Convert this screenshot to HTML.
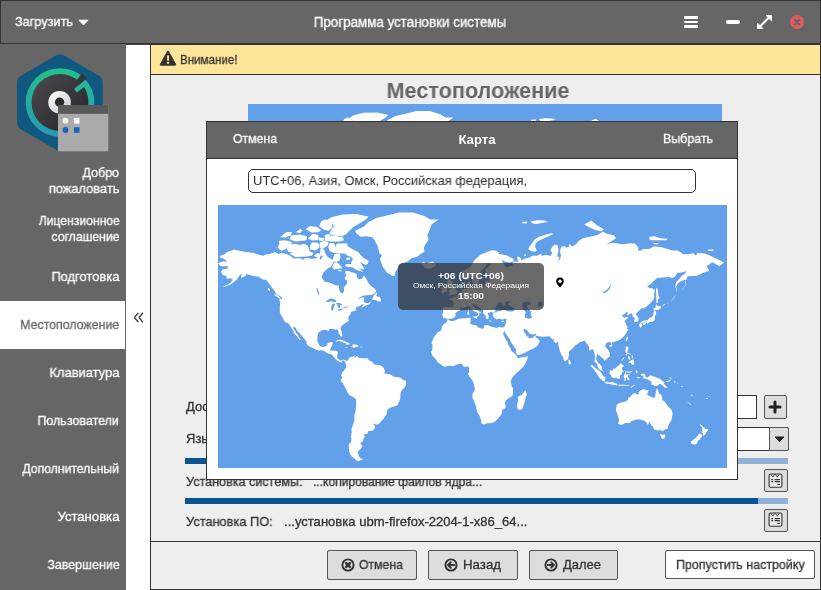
<!DOCTYPE html><html><head><meta charset="utf-8"><title>Программа установки системы</title><style>html,body{margin:0;padding:0}body{width:821px;height:590px;position:relative;overflow:hidden;background:#eee;font-family:'Liberation Sans', sans-serif}.t{position:absolute;white-space:nowrap;display:inline-block;-webkit-text-stroke:0.3px currentColor;will-change:transform}</style></head><body><div style="position:absolute;left:0px;top:0px;width:821px;height:590px;background:#eee"></div>
<div style="position:absolute;left:0px;top:0px;width:821px;height:44px;background:#666;box-sizing:border-box;border:1px solid #333"></div>
<div style="position:absolute;left:0px;top:44px;width:126px;height:546px;background:#666"></div>
<div style="position:absolute;left:126px;top:44px;width:24px;height:546px;background:#fff"></div>
<div style="position:absolute;left:126px;top:44px;width:24px;height:1px;background:#444"></div>
<div style="position:absolute;left:150px;top:44px;width:671px;height:498px;background:#eee;box-sizing:border-box;border:1px solid #333"></div>
<div style="position:absolute;left:151px;top:45px;width:669px;height:29px;background:#ffe599;border-bottom:1px solid #333"></div>
<div style="position:absolute;left:150px;top:541px;width:671px;height:49px;background:#eee;box-sizing:border-box;border:1px solid #333"></div>
<span class="t" style="left:15.2px;top:12.60px;font-size:13px;line-height:17px;color:#fff;font-weight:normal;transform:scaleX(0.9771);transform-origin:0 50%;">Загрузить</span>
<svg style="position:absolute;left:78px;top:19px" width="11" height="7" viewBox="0 0 11 7"><path d="M1 1.2h9L5.5 6z" fill="#fff" stroke="#fff" stroke-width="1" stroke-linejoin="round"/></svg>
<span class="t" style="left:210.2px;width:400px;text-align:center;top:12.65px;font-size:14px;line-height:18px;color:#fff;font-weight:normal;transform:scaleX(0.9550);transform-origin:50% 50%;">Программа установки системы</span>
<div style="position:absolute;left:684px;top:16px;width:14px;height:2.6px;background:#fff;border-radius:1px"></div>
<div style="position:absolute;left:684px;top:20.5px;width:14px;height:2.6px;background:#fff;border-radius:1px"></div>
<div style="position:absolute;left:684px;top:25px;width:14px;height:2.6px;background:#fff;border-radius:1px"></div>
<div style="position:absolute;left:726px;top:20px;width:14px;height:4px;background:#fff;border-radius:2px"></div>
<svg style="position:absolute;left:756px;top:14px" width="17" height="16" viewBox="0 0 17 16"><g fill="#fff" stroke="#fff" stroke-linejoin="round" stroke-linecap="round"><path d="M4 12.5L13 3.5" stroke-width="2" fill="none"/><path d="M10.500 1.500h5v5z" stroke-width="1"/><path d="M1.500 9.500v5h5z" stroke-width="1"/></g></svg>
<svg style="position:absolute;left:789px;top:14px" width="16" height="16" viewBox="0 0 16 16"><circle cx="8" cy="8" r="7" fill="#e05c5c"/><path d="M5.800 5.800l4.400 4.400M10.200 5.800l-4.400 4.400" stroke="#666" stroke-width="2.100" stroke-linecap="round"/></svg>
<div style="position:absolute;left:0px;top:301px;width:125px;height:47.5px;background:#fff"></div>
<span class="t" style="right:701.7px;top:164.00px;font-size:13px;line-height:17px;color:#fff;font-weight:normal;transform:scaleX(0.9634);transform-origin:100% 50%;">Добро</span>
<span class="t" style="right:701.7px;top:180.00px;font-size:13px;line-height:17px;color:#fff;font-weight:normal;transform:scaleX(0.9881);transform-origin:100% 50%;">пожаловать</span>
<span class="t" style="right:701.7px;top:212.00px;font-size:13px;line-height:17px;color:#fff;font-weight:normal;transform:scaleX(0.9334);transform-origin:100% 50%;">Лицензионное</span>
<span class="t" style="right:701.7px;top:228.00px;font-size:13px;line-height:17px;color:#fff;font-weight:normal;transform:scaleX(0.9381);transform-origin:100% 50%;">соглашение</span>
<span class="t" style="right:701.7px;top:268.00px;font-size:13px;line-height:17px;color:#fff;font-weight:normal;transform:scaleX(0.9938);transform-origin:100% 50%;">Подготовка</span>
<span class="t" style="right:702.2px;top:316.00px;font-size:13px;line-height:17px;color:#666;font-weight:normal;transform:scaleX(0.9506);transform-origin:100% 50%;">Местоположение</span>
<span class="t" style="right:701.7px;top:364.00px;font-size:13px;line-height:17px;color:#fff;font-weight:normal;transform:scaleX(0.9940);transform-origin:100% 50%;">Клавиатура</span>
<span class="t" style="right:701.7px;top:412.00px;font-size:13px;line-height:17px;color:#fff;font-weight:normal;transform:scaleX(0.9604);transform-origin:100% 50%;">Пользователи</span>
<span class="t" style="right:701.7px;top:460.00px;font-size:13px;line-height:17px;color:#fff;font-weight:normal;transform:scaleX(0.9383);transform-origin:100% 50%;">Дополнительный</span>
<span class="t" style="right:701.7px;top:508.00px;font-size:13px;line-height:17px;color:#fff;font-weight:normal;transform:scaleX(1.0089);transform-origin:100% 50%;">Установка</span>
<span class="t" style="right:701.7px;top:556.00px;font-size:13px;line-height:17px;color:#fff;font-weight:normal;transform:scaleX(0.9545);transform-origin:100% 50%;">Завершение</span>
<svg style="position:absolute;left:133px;top:312px" width="11" height="11" viewBox="0 0 11 11"><path d="M5 1.3L1.5 5.5 5 9.7M9.5 1.3L6 5.5l3.5 4.2" fill="none" stroke="#444" stroke-width="1.4" stroke-linecap="round" stroke-linejoin="round"/></svg>
<svg style="position:absolute;left:10px;top:48px" width="106" height="110" viewBox="10 48 106 110">
<defs><linearGradient id="tg" x1="0" y1="0" x2="0" y2="1"><stop offset="0" stop-color="#23c08c"/><stop offset="1" stop-color="#2799b3"/></linearGradient>
<linearGradient id="hg" x1="0" y1="0" x2="1" y2="1"><stop offset="0" stop-color="#fff"/><stop offset="1" stop-color="#c8c8c8"/></linearGradient><linearGradient id="dg" x1="0" y1="0" x2="1" y2="1"><stop offset="0" stop-color="#4a4a4e"/><stop offset="1" stop-color="#26262a"/></linearGradient></defs>
<path d="M59.9 63.7L93.5 83.1L93.5 121.9L59.9 141.3L26.3 121.9L26.3 83.1Z" fill="#10587f" stroke="#10587f" stroke-width="18.4" stroke-linejoin="round"/>
<circle cx="60" cy="102.5" r="34.3" fill="url(#tg)"/>
<circle cx="60" cy="102.5" r="28.5" fill="url(#dg)"/>
<path d="M80.1 84.4 L86.8 78.4 L81.7 73.7 L76.2 80.9 Z" fill="#36363a"/>
<path d="M86.6 82.1 L75.5 90.6" stroke="#25b59a" stroke-width="4.6" fill="none"/>
<circle cx="59.6" cy="102.3" r="11.3" fill="url(#hg)"/>
<circle cx="59.6" cy="102.3" r="4.700" fill="#2c2c30"/>
<rect x="58" y="105" width="50.300" height="46.300" fill="#aaa"/>
<rect x="58" y="105" width="50.300" height="8.800" fill="#595959"/>
<circle cx="65.500" cy="120.700" r="2.900" fill="#f4f4ee"/>
<rect x="73.900" y="118" width="5.600" height="5.600" fill="#fafafa"/>
<circle cx="65.500" cy="130" r="2.900" fill="#1565c0"/>
<rect x="73.900" y="127.200" width="5.600" height="5.600" fill="#1565c0"/>
</svg>
<svg style="position:absolute;left:159px;top:50px" width="18" height="17" viewBox="0 0 18 17"><path d="M9 2L16 14.500H2Z" fill="#333" stroke="#333" stroke-width="2.400" stroke-linejoin="round"/><rect x="8.100" y="5.500" width="1.900" height="5.200" fill="#ffe599"/><rect x="8.100" y="11.800" width="1.900" height="2" fill="#ffe599"/></svg>
<span class="t" style="left:180.2px;top:51.00px;font-size:13px;line-height:17px;color:#333;font-weight:normal;transform:scaleX(0.8906);transform-origin:0 50%;">Внимание!</span>
<span class="t" style="left:277.6px;width:400px;text-align:center;top:75.68px;font-size:22px;line-height:29px;color:#666;font-weight:bold;transform:scaleX(0.9836);transform-origin:50% 50%;-webkit-text-stroke:0;">Местоположение</span>
<svg style="position:absolute;left:248px;top:104px" width="474" height="245" viewBox="0 0 509 263" preserveAspectRatio="none"><rect width="509" height="263" fill="#62a0ea"/><use href="#land"/></svg>
<span class="t" style="left:185.5px;top:397.50px;font-size:13px;line-height:17px;color:#333;font-weight:normal;">Доступ</span>
<span class="t" style="left:185.5px;top:429.60px;font-size:13px;line-height:17px;color:#333;font-weight:normal;">Язык</span>
<div style="position:absolute;left:600px;top:395px;width:157px;height:24px;background:#fff;box-sizing:border-box;border:1px solid #333"></div>
<div style="position:absolute;left:763.5px;top:395.3px;width:23.7px;height:23.7px;background:#ddd;box-sizing:border-box;border:1px solid #555;border-radius:2px"></div>
<svg style="position:absolute;left:768px;top:399.800px" width="14" height="14" viewBox="0 0 14 14"><path d="M7 2v10M2 7h10" stroke="#222" stroke-width="3" stroke-linecap="round"/></svg>
<div style="position:absolute;left:600px;top:427px;width:189px;height:24px;background:#fff;box-sizing:border-box;border:1px solid #333;border-radius:2px"></div>
<div style="position:absolute;left:769px;top:427px;width:20px;height:24px;background:#ddd;box-sizing:border-box;border:1px solid #555;border-radius:0 2px 2px 0"></div>
<svg style="position:absolute;left:774.300px;top:436.100px" width="11" height="7" viewBox="0 0 11 7"><path d="M1 1h9L5.500 5.600z" fill="#222" stroke="#222" stroke-width="1" stroke-linejoin="round"/></svg>
<div style="position:absolute;left:185px;top:458px;width:603px;height:6px;background:#8fb2d6"></div>
<div style="position:absolute;left:185px;top:458px;width:500px;height:6px;background:#0b5394"></div>
<div style="position:absolute;left:185px;top:498px;width:603px;height:6px;background:#8fb2d6"></div>
<div style="position:absolute;left:185px;top:498px;width:573px;height:6px;background:#0b5394"></div>
<span class="t" style="left:185.5px;top:472.50px;font-size:13px;line-height:17px;color:#333;font-weight:normal;transform:scaleX(0.9688);transform-origin:0 50%;">Установка системы:</span>
<span class="t" style="left:313.0px;top:472.50px;font-size:13px;line-height:17px;color:#333;font-weight:normal;transform:scaleX(0.9259);transform-origin:0 50%;">...копирование файлов ядра...</span>
<span class="t" style="left:185.5px;top:512.90px;font-size:13px;line-height:17px;color:#333;font-weight:normal;transform:scaleX(0.9838);transform-origin:0 50%;">Установка ПО:</span>
<span class="t" style="left:283.5px;top:512.90px;font-size:13px;line-height:17px;color:#333;font-weight:normal;transform:scaleX(1.0041);transform-origin:0 50%;">...установка ubm-firefox-2204-1-x86_64...</span>
<div style="position:absolute;left:763.5px;top:468.6px;width:24.5px;height:23px;background:#ddd;box-sizing:border-box;border:1px solid #555;border-radius:2px"></div>
<svg style="position:absolute;left:768px;top:472.5px" width="15" height="16" viewBox="0 0 15 16"><rect x="1.1" y="1" width="12.800" height="13.300" rx="1.600" fill="#ececec" stroke="#333" stroke-width="1.100"/><path d="M2.800 1.300l2 2.800 2-2.800M7.300 1.300l2 2.800 2-2.800" fill="none" stroke="#333" stroke-width="0.900"/><path d="M3.300 6.600h1.800M6.600 6.600h5.300M3.300 8.600h1.800M6.600 8.600h5.300M9.400 11.400h2.500" stroke="#333" stroke-width="1.100"/></svg>
<div style="position:absolute;left:763.5px;top:508.5px;width:24.5px;height:23px;background:#ddd;box-sizing:border-box;border:1px solid #555;border-radius:2px"></div>
<svg style="position:absolute;left:768px;top:512.4px" width="15" height="16" viewBox="0 0 15 16"><rect x="1.1" y="1" width="12.800" height="13.300" rx="1.600" fill="#ececec" stroke="#333" stroke-width="1.100"/><path d="M2.800 1.300l2 2.800 2-2.800M7.300 1.300l2 2.800 2-2.800" fill="none" stroke="#333" stroke-width="0.900"/><path d="M3.300 6.600h1.800M6.600 6.600h5.300M3.300 8.600h1.800M6.600 8.600h5.300M9.400 11.400h2.500" stroke="#333" stroke-width="1.100"/></svg>
<div style="position:absolute;left:327.2px;top:550px;width:89.6px;height:29.5px;background:#ddd;box-sizing:border-box;border:1px solid #555;border-radius:2px"></div>
<svg style="position:absolute;left:340.9px;top:557.6px" width="14" height="14" viewBox="0 0 14 14"><circle cx="7" cy="7" r="5.600" fill="none" stroke="#333" stroke-width="1.900"/><path d="M5.100 5.100l3.800 3.800M8.900 5.100l-3.800 3.800" stroke="#333" stroke-width="2.500" stroke-linecap="round"/></svg>
<span class="t" style="left:359.3px;top:555.70px;font-size:13px;line-height:17px;color:#333;font-weight:normal;transform:scaleX(0.9409);transform-origin:0 50%;">Отмена</span>
<div style="position:absolute;left:428.4px;top:550px;width:89.4px;height:29.5px;background:#ddd;box-sizing:border-box;border:1px solid #555;border-radius:2px"></div>
<svg style="position:absolute;left:444.1px;top:557.6px" width="14" height="14" viewBox="0 0 14 14"><circle cx="7" cy="7" r="5.600" fill="none" stroke="#333" stroke-width="1.900"/><path d="M10.300 7H4.500M6.800 4.300L4 7l2.800 2.700" fill="none" stroke="#333" stroke-width="2" stroke-linecap="round" stroke-linejoin="round"/></svg>
<span class="t" style="left:462.7px;top:555.70px;font-size:13px;line-height:17px;color:#333;font-weight:normal;transform:scaleX(1.0228);transform-origin:0 50%;">Назад</span>
<div style="position:absolute;left:528.6px;top:550px;width:89.4px;height:29.5px;background:#ddd;box-sizing:border-box;border:1px solid #555;border-radius:2px"></div>
<svg style="position:absolute;left:544.3px;top:557.6px" width="14" height="14" viewBox="0 0 14 14"><circle cx="7" cy="7" r="5.600" fill="none" stroke="#333" stroke-width="1.900"/><path d="M3.700 7h5.800M7.200 4.300L10 7 7.200 9.700" fill="none" stroke="#333" stroke-width="1.800" stroke-linecap="round" stroke-linejoin="round"/></svg>
<span class="t" style="left:563.4px;top:555.70px;font-size:13px;line-height:17px;color:#333;font-weight:normal;transform:scaleX(0.9975);transform-origin:0 50%;">Далее</span>
<div style="position:absolute;left:665.4px;top:550.3px;width:149.4px;height:29.2px;background:#fff;box-sizing:border-box;border:1px solid #555;border-radius:2px"></div>
<span class="t" style="left:675.9px;top:555.70px;font-size:13px;line-height:17px;color:#333;font-weight:normal;transform:scaleX(0.9592);transform-origin:0 50%;">Пропустить настройку</span>
<div style="position:absolute;left:206px;top:121px;width:532px;height:359px;background:#fff;box-sizing:border-box;border:1px solid #333"></div>
<div style="position:absolute;left:207px;top:122px;width:530px;height:36px;background:#666;border-bottom:1px solid #333"></div>
<span class="t" style="left:233.0px;top:129.70px;font-size:13px;line-height:17px;color:#fff;font-weight:normal;transform:scaleX(0.9431);transform-origin:0 50%;">Отмена</span>
<span class="t" style="left:277.4px;width:400px;text-align:center;top:130.50px;font-size:13px;line-height:17px;color:#fff;font-weight:bold;transform:scaleX(1.0135);transform-origin:50% 50%;-webkit-text-stroke:0;">Карта</span>
<span class="t" style="left:662.8px;top:129.70px;font-size:13px;line-height:17px;color:#fff;font-weight:normal;transform:scaleX(0.9547);transform-origin:0 50%;">Выбрать</span>
<div style="position:absolute;left:248px;top:169px;width:448px;height:24px;background:#fff;box-sizing:border-box;border:1px solid #333;border-radius:5px"></div>
<span class="t" style="left:253.0px;top:171.70px;font-size:13px;line-height:17px;color:#2a2a2a;font-weight:normal;transform:scaleX(0.9924);transform-origin:0 50%;-webkit-text-stroke:0;">UTC+06, Азия, Омск, Российская федерация,</span>
<svg style="position:absolute;left:218px;top:205px" width="509" height="263" viewBox="0 0 509 263"><rect width="509" height="263" fill="#62a0ea"/><g id="land"><path fill="#fff" d="M0.0 58.6L2.4 57.2L5.9 56.3L8.8 57.2L7.8 55.3L5.7 53.7L1.7 52.2L2.5 50.7L7.1 49.0L8.6 47.2L16.3 44.6L22.6 45.9L27.6 47.0L35.3 47.7L38.2 49.0L45.2 50.7L48.1 49.2L49.5 49.5L55.1 48.0L56.6 46.7L60.8 49.2L62.2 48.0L66.5 48.5L72.1 50.5L74.9 52.9L76.3 53.4L82.0 53.2L84.8 54.1L84.8 55.8L86.2 53.4L89.1 52.9L94.0 53.7L98.3 53.4L99.7 51.7L101.8 52.4L102.5 54.9L104.6 51.7L101.8 49.2L102.5 44.1L103.9 42.8L106.7 45.4L107.5 48.7L109.6 51.7L113.1 54.1L114.5 54.9L116.6 49.2L121.6 48.5L122.6 51.7L121.6 55.3L118.8 57.0L115.9 56.5L114.5 58.9L113.1 61.8L109.6 63.4L107.5 65.6L105.3 67.8L103.9 71.0L104.3 73.6L106.7 76.8L110.3 77.2L113.1 78.2L117.4 80.2L120.9 80.8L121.3 85.1L123.0 88.0L124.7 88.5L126.1 86.1L125.8 82.2L128.7 79.2L129.4 76.2L126.5 73.6L128.0 71.0L127.2 65.9L130.8 66.1L133.6 67.2L135.7 67.8L138.6 68.9L139.3 73.1L141.4 74.6L144.2 73.6L146.1 70.4L148.5 74.2L150.6 78.2L152.7 80.8L156.2 83.2L158.4 86.1L156.9 88.0L154.1 89.8L149.9 90.2L145.6 90.4L142.8 91.7L140.0 94.0L137.1 96.4L139.3 94.8L144.2 92.2L146.6 93.0L145.6 94.4L145.9 96.2L146.3 97.6L148.5 98.0L150.6 98.3L152.7 96.6L152.7 98.0L151.3 99.2L147.8 100.4L144.9 102.2L143.9 101.5L145.6 99.4L146.3 98.9L142.8 99.7L142.8 100.4L140.0 101.5L138.3 102.2L137.4 103.7L138.6 105.2L136.9 105.8L135.0 106.3L132.9 107.3L132.9 108.8L131.5 110.3L130.8 111.6L130.1 113.2L130.4 114.0L130.8 116.1L128.9 116.9L127.2 118.2L125.8 119.3L124.4 120.3L123.0 121.7L122.4 123.5L123.6 126.6L124.4 129.2L124.0 131.5L122.7 131.7L121.9 130.0L120.5 127.7L120.5 125.9L118.8 124.3L116.9 124.8L115.2 123.7L113.1 123.9L111.0 124.0L111.3 125.7L109.6 125.6L107.5 124.9L104.6 124.9L103.2 125.9L100.4 127.4L99.8 129.7L99.4 132.7L99.3 136.0L101.5 140.4L103.9 142.0L107.5 141.4L109.3 140.1L109.7 137.9L113.1 137.0L114.5 137.2L114.8 138.7L113.5 141.6L112.7 143.1L112.0 145.4L113.8 145.5L115.9 145.4L118.8 146.0L119.9 146.7L119.5 149.6L119.0 151.7L119.5 153.2L120.9 154.6L122.3 155.4L124.4 155.0L125.8 154.6L128.0 155.7L128.7 156.7L127.2 157.4L126.5 156.0L125.1 155.3L123.7 156.4L124.0 157.7L122.3 157.3L120.5 156.4L119.2 155.6L117.4 153.9L116.2 152.4L113.8 149.6L111.7 149.0L108.9 148.1L106.0 146.0L103.9 144.9L101.8 145.7L98.3 144.7L96.1 143.8L93.3 142.3L90.5 140.9L88.4 139.0L88.7 137.2L87.2 134.7L84.8 132.0L83.0 129.7L81.3 127.7L79.2 125.9L77.8 122.8L75.4 121.7L75.4 123.5L77.1 125.9L78.5 128.2L80.2 130.4L81.3 132.7L82.7 134.7L82.0 135.1L79.9 133.0L78.9 131.2L77.1 129.2L75.2 127.7L76.1 126.6L74.2 124.6L72.8 122.0L71.8 120.3L70.0 118.0L67.2 117.2L65.3 114.0L64.3 111.9L62.5 109.1L61.8 107.6L61.9 104.9L61.8 102.3L62.2 97.6L61.2 93.7L63.6 93.9L64.3 95.3L63.9 92.6L61.5 90.8L58.0 88.9L56.6 86.1L54.4 83.2L53.0 81.2L50.9 78.2L48.1 74.8L44.5 74.4L42.4 72.7L39.6 71.5L35.3 71.0L31.8 70.0L28.3 69.1L27.6 71.0L25.4 72.1L22.9 72.7L23.3 70.0L25.4 68.5L22.6 69.3L20.5 72.1L19.1 74.2L16.3 76.8L13.4 78.9L9.9 80.6L6.4 81.8L4.5 82.0L7.8 80.2L10.6 79.2L13.4 76.8L14.8 73.8L13.4 73.6L10.6 73.6L8.5 73.8L8.5 71.0L4.9 70.0L3.5 67.8L2.8 66.7L4.5 64.5L7.1 64.1L9.9 63.2L9.9 61.2L7.1 61.2L4.2 61.2L2.1 60.5ZM137.1 25.8L145.6 21.8L150.6 16.9L158.4 12.9L166.8 11.1L181.0 7.6L195.1 7.6L206.4 11.1L212.1 14.6L220.6 14.6L213.5 19.5L211.4 25.8L209.3 30.3L210.7 34.6L207.8 38.8L205.7 42.8L206.4 46.7L202.2 49.2L199.4 51.7L193.7 52.9L189.5 56.5L184.5 58.2L181.0 60.0L179.6 63.4L177.4 66.7L176.7 70.6L174.6 71.3L171.8 69.3L169.0 67.8L166.8 64.5L164.7 61.8L163.3 57.7L161.9 54.1L164.0 50.5L161.2 48.0L160.5 44.1L159.1 40.1L156.9 36.0L154.8 32.6L148.5 31.2L142.8 31.7L138.6 28.8ZM202.9 58.9L205.7 56.8L207.8 58.9L212.1 57.2L214.9 56.5L217.0 58.9L218.4 60.0L216.3 61.6L212.1 63.4L208.5 63.2L205.7 62.5L206.4 61.2L203.6 60.3L205.7 59.6ZM145.6 67.0L138.6 65.0L134.3 62.3L129.4 61.8L126.8 60.9L128.0 59.1L132.9 58.9L133.6 56.5L135.0 54.1L132.9 51.7L129.4 50.5L126.5 48.5L122.3 48.5L118.1 48.2L113.8 47.2L111.3 45.4L110.3 41.5L111.7 38.2L115.9 38.0L117.4 40.7L116.6 43.3L118.8 38.8L123.0 38.2L127.2 40.1L130.1 41.5L132.9 43.3L137.1 45.4L140.7 47.2L142.4 50.0L146.3 53.4L150.6 55.8L149.9 58.4L147.8 60.3L144.9 58.6L142.1 56.5L144.2 60.0L146.3 63.9L144.2 64.5L140.7 63.0L143.5 65.4ZM71.4 48.2L74.9 50.5L77.1 52.0L83.4 51.7L89.1 51.5L94.0 50.5L95.4 48.0L91.9 46.4L89.8 40.7L86.2 38.8L82.0 40.1L76.3 38.8L70.7 40.1L68.6 44.1L70.7 47.0L75.6 47.5ZM59.4 42.8L63.6 45.7L67.4 44.4L70.0 41.5L72.8 39.6L74.2 37.4L70.7 36.0L65.7 35.2L60.8 36.0L61.1 39.6ZM92.2 44.6L97.6 45.4L101.1 42.8L101.4 39.6L99.0 37.4L94.0 37.4L91.9 40.7ZM101.8 42.8L105.8 43.3L110.3 40.1L110.3 36.9L106.0 36.0L101.8 37.4L101.8 40.7ZM96.1 50.5L99.7 48.0L103.2 49.5L102.1 52.2L97.8 52.2ZM106.7 35.7L106.7 30.3L111.0 28.8L118.8 31.2L125.1 32.3L125.8 35.5L121.6 36.6L113.1 36.6ZM89.8 33.8L94.7 28.8L100.4 30.0L100.4 34.9L94.7 35.5ZM100.4 32.6L105.8 32.9L105.8 35.7L101.4 36.0ZM71.4 33.8L73.5 30.3L82.0 29.4L89.1 31.2L88.4 35.2L82.0 36.0L77.8 36.6L73.5 35.2ZM62.2 32.3L67.9 27.3L74.2 27.0L72.8 30.3L67.9 32.6ZM111.7 30.6L124.4 31.2L128.7 28.8L132.2 24.9L135.7 21.8L141.4 18.5L147.8 14.6L150.6 11.8L138.6 9.0L124.4 9.4L113.1 12.2L108.9 15.2L114.5 18.5L115.9 21.8L113.1 24.9L111.7 27.9ZM101.1 21.1L103.2 16.2L107.5 14.2L113.8 17.9L114.5 22.7L110.3 25.8L104.6 24.3ZM87.7 24.3L91.9 21.1L99.0 22.1L103.2 25.2L100.4 27.3L93.3 27.6ZM114.1 62.3L116.2 57.7L119.0 57.2L123.0 60.9L124.7 63.0L120.2 64.1L116.2 64.5ZM153.7 95.1L154.8 92.6L156.2 89.8L158.4 87.8L159.1 87.8L158.4 90.8L159.8 91.7L161.9 92.0L162.6 93.5L163.0 95.3L162.5 96.7L160.5 96.2L159.1 96.2L158.4 95.1L155.5 95.1ZM56.1 89.3L60.1 90.4L62.9 93.5L61.5 93.5L59.4 92.0L56.8 90.4ZM49.5 83.2L51.3 83.2L52.3 86.6L50.6 85.5ZM117.4 136.7L118.8 135.2L121.2 134.7L123.7 134.9L125.8 135.8L128.0 136.9L130.1 137.8L132.6 139.1L130.8 139.5L127.7 139.7L128.4 138.5L126.5 137.9L124.4 136.9L122.3 136.3L120.5 135.7L118.8 136.4ZM132.2 141.7L134.6 141.6L135.0 140.9L133.8 139.7L136.2 139.5L138.6 139.7L140.0 140.4L140.8 141.4L139.3 141.7L137.9 142.0L136.4 142.8L135.0 142.2L132.9 142.2ZM126.8 141.9L129.7 142.0L129.4 142.5L127.2 142.5ZM142.5 141.6L144.6 141.7L144.5 142.3L142.5 142.3ZM128.2 156.0L128.9 155.9L130.6 154.6L130.8 153.0L131.8 152.4L133.6 152.0L135.5 151.2L136.7 150.4L136.4 152.2L136.3 152.9L138.3 151.7L138.6 150.7L140.0 151.9L141.0 152.9L144.2 153.0L146.1 153.6L148.5 152.9L150.0 152.9L149.2 153.9L151.3 155.3L151.6 156.0L154.1 156.7L155.5 158.4L156.9 159.7L159.8 159.7L161.9 160.3L164.0 161.3L165.4 162.4L166.8 165.5L166.8 167.4L165.4 168.1L166.8 168.5L169.0 168.8L169.7 169.5L171.1 169.1L173.9 170.2L174.9 171.6L178.2 172.0L181.0 172.2L183.1 173.3L185.2 174.9L187.6 175.4L188.2 178.0L188.0 180.1L186.6 182.5L184.9 184.1L183.1 186.6L182.4 189.4L182.4 193.1L181.4 196.0L180.3 198.2L179.6 199.7L178.2 201.0L176.5 201.2L173.9 202.1L171.8 203.0L169.7 204.6L168.8 206.4L168.8 209.2L166.8 211.8L165.4 214.1L163.6 215.7L161.9 218.1L159.9 219.5L158.1 219.5L155.5 218.4L155.0 219.0L156.7 220.5L157.2 222.1L156.1 224.6L154.1 225.7L149.9 226.2L149.6 228.7L145.6 229.5L147.0 232.1L145.6 233.3L144.9 236.4L142.1 238.2L144.2 240.8L144.2 241.7L142.1 244.5L140.0 246.3L140.0 248.6L140.8 249.9L140.7 251.0L142.1 252.9L145.3 254.3L143.5 255.1L140.7 255.9L138.6 255.5L136.4 253.5L134.3 252.0L132.2 249.5L131.2 246.3L130.8 242.6L130.8 239.6L132.9 237.3L133.6 233.8L132.6 232.6L133.2 230.4L133.6 227.5L133.6 223.7L134.6 220.5L136.2 216.5L136.4 211.8L136.7 208.7L137.7 205.7L138.0 201.9L138.3 198.2L138.1 194.4L136.4 192.8L133.6 191.3L131.2 189.9L129.7 187.7L128.5 185.1L127.0 182.3L125.8 179.7L124.6 177.7L123.0 176.6L122.6 174.4L124.0 172.9L124.7 171.6L123.0 171.2L123.3 169.5L124.1 168.1L124.4 166.9L126.1 165.9L126.5 164.5L128.0 163.1L128.2 161.7L128.0 159.6L127.4 157.9ZM274.0 45.2L277.1 45.4L281.4 47.2L279.9 48.5L284.2 49.5L288.4 50.2L295.5 54.1L295.5 56.5L291.3 57.5L286.3 56.3L283.5 55.1L286.3 60.0L287.0 61.6L290.6 62.5L291.3 61.2L294.8 60.9L294.1 58.2L296.9 56.5L300.0 57.0L299.0 51.7L300.5 51.7L302.6 52.9L303.3 55.6L305.4 53.9L312.5 52.2L313.9 50.7L319.5 50.7L323.1 48.5L323.8 50.7L328.7 49.7L332.3 51.0L334.4 48.0L332.3 45.4L334.4 41.5L336.5 39.6L340.0 40.7L340.5 45.4L339.3 50.5L341.5 52.9L339.3 56.5L342.2 54.1L342.9 50.5L341.9 45.4L343.6 41.5L347.1 41.2L348.2 42.8L350.6 41.7L351.8 38.8L354.2 41.7L359.1 38.2L360.5 36.0L364.8 33.2L371.9 31.7L378.9 30.3L385.0 26.7L388.8 28.8L395.9 30.3L398.0 33.2L391.6 37.4L387.4 39.6L393.1 38.0L397.3 38.0L404.4 39.3L412.9 38.2L417.1 38.8L420.6 42.8L419.9 45.4L422.8 45.4L425.6 44.1L431.2 44.1L435.5 41.5L442.5 42.0L449.6 44.1L453.9 45.4L459.5 45.4L463.8 48.0L465.2 49.2L470.8 49.2L475.1 48.0L477.9 50.5L479.3 48.0L486.4 48.5L492.0 50.5L499.1 54.1L506.2 57.5L502.6 60.0L501.6 61.4L494.9 57.2L493.4 57.7L490.6 60.0L488.5 60.7L490.6 64.5L491.0 66.1L485.0 67.8L480.7 70.0L477.9 71.0L472.2 71.0L469.4 71.5L468.0 75.2L466.6 76.2L468.0 79.2L466.6 81.6L463.8 85.1L461.6 87.0L459.1 88.9L458.1 85.1L457.4 81.2L458.1 77.2L460.9 74.2L463.8 71.0L466.6 68.9L468.7 66.1L470.1 65.6L463.8 67.4L459.5 67.8L456.7 72.1L453.9 73.1L451.0 72.1L444.0 72.5L439.0 73.1L435.5 76.2L432.6 79.2L429.1 81.6L431.9 83.2L434.1 83.2L436.9 84.7L436.2 88.9L436.2 93.5L433.4 97.1L429.8 100.6L425.6 103.5L424.0 103.0L422.3 104.4L420.9 105.8L418.5 108.3L417.8 109.4L419.2 110.8L420.5 113.2L420.6 115.6L419.9 116.3L417.8 116.9L416.1 117.2L416.4 114.8L416.7 113.2L415.7 111.9L414.3 111.6L414.6 109.1L413.3 108.3L410.0 109.9L409.0 110.3L410.0 107.4L408.6 106.9L405.8 109.6L403.9 110.3L405.1 112.1L406.5 112.7L408.6 112.1L410.7 112.9L408.6 114.0L406.5 116.0L407.6 118.0L408.6 120.4L409.7 122.0L408.6 123.5L410.0 124.6L409.3 126.6L407.9 128.5L406.5 130.7L404.4 132.7L402.3 134.7L399.4 135.7L397.3 136.4L394.5 137.3L393.5 139.0L392.6 137.2L390.2 137.0L388.4 138.2L387.1 140.6L388.1 142.6L390.5 145.2L391.9 148.4L391.9 151.3L389.5 153.2L388.4 154.6L386.0 155.7L386.0 153.9L384.6 153.2L383.2 152.4L382.2 150.7L380.3 150.0L380.1 149.0L378.9 149.1L378.6 151.7L377.9 153.9L378.6 154.9L379.3 156.3L380.1 158.1L381.8 159.3L383.6 161.3L383.9 163.8L384.9 166.1L383.7 165.9L381.0 164.1L379.6 161.7L379.3 159.6L378.2 158.1L376.5 156.7L376.8 153.9L377.1 151.0L376.1 148.1L375.5 144.8L374.0 144.1L372.3 145.5L370.9 145.2L371.1 142.3L369.7 139.7L368.0 137.9L367.3 136.0L365.5 136.0L363.4 136.7L361.2 137.2L360.3 138.7L357.7 140.1L355.6 142.3L353.9 144.2L352.1 145.4L350.9 146.7L351.1 149.3L350.5 151.7L350.4 153.4L349.2 154.9L348.1 155.6L347.1 156.6L345.7 155.0L344.7 151.7L343.3 149.6L342.2 146.7L341.2 143.8L340.5 140.9L340.3 137.9L339.8 136.7L337.9 138.2L335.1 136.0L336.9 135.1L334.4 134.2L332.7 132.7L331.6 131.3L328.0 131.5L324.5 131.7L321.0 131.3L318.5 131.0L317.8 128.9L314.6 129.5L312.5 128.9L310.3 127.6L308.9 125.1L306.8 123.7L306.1 124.3L305.4 125.1L306.4 127.4L308.2 129.4L308.7 131.2L309.6 132.0L310.1 130.3L310.5 132.0L310.3 133.0L312.5 133.2L314.6 133.0L316.7 130.7L317.3 129.8L317.6 132.3L320.2 133.9L322.1 135.7L320.5 138.7L319.3 140.9L317.4 142.3L315.3 143.8L311.8 144.9L306.8 147.7L301.2 149.9L299.0 150.0L298.0 147.4L297.9 144.5L295.5 140.9L293.0 137.2L291.3 133.5L289.1 130.4L287.0 127.4L286.9 125.1L286.0 127.4L285.9 127.9L284.5 126.5L283.5 124.5L283.2 122.5L285.9 122.3L286.9 120.4L287.7 118.2L288.3 115.6L288.7 113.9L286.3 113.7L284.2 114.7L280.9 113.5L279.0 114.4L277.1 113.5L276.1 112.4L274.7 110.6L275.3 109.1L274.6 108.3L275.3 107.6L278.5 107.4L278.7 106.4L282.1 106.3L284.9 104.9L287.0 104.9L289.1 106.3L292.0 106.6L294.5 106.6L296.4 105.6L296.2 103.7L294.1 102.3L292.0 100.8L290.3 99.7L291.3 97.1L293.1 95.8L290.6 96.2L287.3 97.4L287.0 98.7L289.1 99.0L287.3 99.7L285.2 100.8L283.5 99.0L285.0 98.0L282.8 97.4L281.1 97.1L279.5 99.2L278.1 101.5L277.1 103.2L276.7 104.1L277.4 105.6L278.5 106.3L276.4 106.6L275.3 107.4L274.6 108.1L274.3 106.9L272.2 106.8L271.5 107.9L270.1 107.6L269.6 109.1L270.5 110.4L271.5 111.6L270.3 111.7L270.3 114.0L269.2 114.0L268.2 113.5L267.5 111.9L268.4 111.1L266.9 110.3L266.1 108.9L265.0 107.4L265.1 105.6L263.8 104.2L261.6 102.9L259.2 101.0L258.0 99.4L257.0 99.9L256.8 98.5L254.9 99.2L255.1 101.1L256.8 102.3L257.8 104.4L260.2 105.1L260.2 105.9L262.0 106.9L263.7 108.1L262.8 108.3L261.6 107.4L261.0 108.8L261.7 109.9L260.6 111.1L259.7 111.7L259.9 110.3L259.9 108.3L258.5 107.3L257.6 106.9L255.9 106.1L254.8 105.2L253.1 104.1L252.1 102.3L251.4 101.3L250.1 100.8L248.1 101.8L246.0 103.0L244.3 102.5L242.5 102.7L241.8 104.1L242.1 105.2L240.6 106.1L238.7 107.1L237.1 109.1L237.8 110.3L236.5 112.2L234.7 113.5L231.3 113.7L229.9 114.7L228.6 113.9L227.2 112.9L224.9 113.2L225.1 110.8L224.1 110.3L225.1 107.4L225.1 104.9L224.4 103.2L226.2 102.0L229.8 102.2L232.6 102.3L235.0 102.5L235.7 100.6L235.8 98.0L234.4 95.8L231.2 94.6L230.7 93.7L233.3 93.0L235.3 93.3L235.0 91.3L235.8 91.9L237.8 91.7L239.7 90.6L239.9 89.1L242.2 88.1L243.5 87.0L244.3 85.1L246.0 84.3L247.7 84.2L249.6 84.0L250.0 82.8L249.3 81.2L249.1 78.2L249.6 77.0L252.5 75.8L252.1 78.2L252.8 78.9L251.4 80.8L251.7 82.2L253.1 82.8L254.9 82.6L257.0 82.8L257.8 83.4L260.2 82.6L263.7 81.8L265.5 82.4L267.2 80.8L267.2 77.6L268.2 76.0L269.5 75.8L270.5 77.2L271.9 76.2L271.9 74.6L270.8 73.6L270.8 72.7L272.9 72.1L277.1 72.1L280.2 71.3L278.1 70.0L274.3 70.2L270.1 71.3L267.6 69.3L267.9 66.7L267.2 64.5L269.3 62.8L272.2 60.5L273.4 59.8L271.7 58.2L268.9 58.4L267.6 61.2L266.5 63.0L263.7 65.0L262.0 67.4L261.9 69.6L264.1 71.3L263.3 72.7L261.3 74.2L260.9 77.2L260.2 78.9L258.0 79.2L257.6 80.4L255.9 80.4L255.3 78.7L254.2 76.0L253.4 73.1L252.5 71.5L252.0 73.1L249.6 74.8L247.4 75.2L245.5 73.3L244.6 70.0L244.6 67.2L246.7 65.2L249.6 63.4L252.4 61.8L254.5 58.9L255.9 55.8L258.0 53.4L260.2 51.7L263.0 49.2L266.5 48.0L270.1 46.4ZM229.2 115.2L230.0 115.0L233.3 116.0L234.7 116.3L237.5 115.2L239.7 114.0L241.8 113.5L244.6 113.5L248.1 113.2L251.4 112.7L253.1 113.2L252.4 114.5L252.8 116.4L251.7 117.7L253.1 119.2L255.2 119.9L256.2 119.8L259.0 120.7L259.7 122.3L262.3 122.9L264.4 123.9L265.8 122.8L265.8 120.9L267.9 119.8L270.2 120.3L272.9 121.7L275.7 122.3L278.5 122.9L279.9 122.3L281.4 121.8L283.2 122.5L283.5 124.5L284.9 127.4L285.6 129.7L287.0 132.7L288.0 134.9L289.8 137.2L290.3 140.1L292.0 142.3L293.4 146.0L295.5 147.4L297.6 149.6L298.8 150.7L298.6 151.7L300.5 153.2L304.0 152.2L306.8 152.0L309.9 151.2L309.6 153.2L308.2 156.7L306.8 159.6L304.7 162.4L302.6 164.5L299.0 167.4L296.9 169.5L295.5 171.2L294.1 173.0L293.4 174.4L292.7 176.6L293.4 178.0L293.4 180.8L294.8 183.0L294.9 185.8L295.2 188.7L294.1 191.2L291.3 192.8L289.1 194.5L287.0 196.4L287.4 199.7L287.7 202.7L284.2 204.9L283.9 208.0L282.8 210.3L281.4 211.8L279.2 214.6L277.1 216.5L273.9 218.1L269.3 218.2L265.8 219.4L263.5 218.6L263.3 215.7L262.0 211.8L260.9 209.7L259.0 206.8L258.0 201.2L256.3 196.7L254.5 193.1L254.2 190.6L255.2 187.3L256.9 185.6L256.6 183.0L256.2 180.5L255.2 177.3L254.8 176.3L253.8 174.4L251.7 172.0L250.3 169.5L249.8 169.1L251.0 167.4L251.1 165.2L251.4 163.1L250.3 162.1L249.6 161.6L247.4 161.8L246.0 162.0L244.6 159.9L243.2 159.0L241.1 159.0L238.9 159.6L236.8 160.4L234.7 161.3L232.6 160.8L230.5 160.7L226.9 161.8L224.8 161.0L222.3 159.0L219.9 157.4L218.9 156.0L218.0 154.4L216.3 152.7L214.9 151.3L213.8 150.3L213.8 148.9L212.8 147.1L214.2 145.2L214.5 142.3L214.6 140.1L213.5 137.9L214.5 135.7L215.2 133.5L216.6 131.2L218.4 128.9L219.3 127.6L221.3 126.6L223.4 125.1L223.8 123.5L223.7 122.0L225.5 119.2L227.6 118.0L229.1 116.1ZM307.2 185.1L308.5 188.0L308.9 190.2L307.8 191.6L307.5 193.8L306.5 197.5L305.4 200.4L304.3 203.9L301.9 204.9L299.7 204.2L298.8 200.4L299.7 197.5L300.2 195.3L299.7 192.3L301.2 190.9L303.3 190.2L305.4 188.0L306.5 186.3ZM439.0 183.3L440.4 185.8L440.9 188.4L443.0 189.4L444.0 192.3L444.4 195.0L446.8 196.7L448.9 199.7L450.7 201.9L453.2 204.2L454.1 206.4L454.6 209.5L453.9 212.6L453.2 215.7L451.5 217.9L450.0 221.3L449.6 223.7L446.8 224.4L444.4 226.2L442.5 225.0L441.1 225.2L438.3 225.2L436.2 224.6L434.8 221.3L433.4 220.5L432.6 218.6L431.9 220.0L432.4 216.5L432.4 215.7L429.8 219.4L429.5 219.5L428.4 217.3L427.0 216.2L424.2 214.9L419.9 214.3L415.7 215.4L412.9 216.5L412.1 217.9L407.2 217.9L404.4 219.7L401.5 219.4L400.1 218.6L401.1 214.9L400.4 212.6L399.4 209.5L398.0 205.7L398.0 203.4L398.7 200.4L399.0 199.4L401.5 197.9L404.4 197.2L406.5 196.7L408.6 196.0L410.3 193.8L410.5 192.3L412.1 192.8L412.4 191.2L413.6 190.2L415.0 188.7L417.1 188.0L418.8 189.4L420.6 189.3L420.6 187.3L422.0 185.8L424.2 185.1L424.9 184.1L428.4 185.1L430.8 185.1L429.8 187.3L429.1 189.4L431.2 190.9L434.1 192.3L436.2 193.1L437.3 190.9L437.7 188.0L437.9 185.8ZM442.1 229.0L444.7 229.7L447.2 229.4L447.2 231.6L446.1 233.4L444.4 234.0L443.0 232.1ZM481.6 218.7L483.8 220.2L485.0 222.3L486.4 222.3L486.7 223.7L488.5 224.1L490.2 223.9L489.3 226.5L487.9 227.2L487.7 228.9L485.5 230.7L484.4 230.2L485.0 228.2L483.1 226.9L484.3 225.4L484.4 223.7L483.6 222.1L481.9 219.7ZM481.7 228.5L484.1 229.7L484.1 231.2L482.4 233.3L482.1 234.5L480.0 235.5L479.3 238.2L477.2 239.6L475.3 239.6L472.7 238.3L473.1 236.4L475.2 234.7L477.6 232.9L479.4 231.2L480.6 229.2ZM437.6 105.9L438.3 109.1L436.9 111.1L436.9 113.2L436.6 115.3L435.2 116.4L433.8 116.9L431.2 117.1L431.0 117.6L429.5 118.8L428.4 117.1L426.3 117.4L424.2 118.0L422.8 118.0L423.9 119.2L423.5 122.0L422.3 122.8L421.6 121.2L420.9 119.6L422.0 118.2L422.8 117.6L424.9 115.8L427.7 115.5L429.8 115.3L431.0 113.4L431.7 112.4L433.4 112.6L434.8 110.8L435.5 108.6L435.5 107.3L435.9 106.3ZM424.9 118.4L427.4 117.6L428.0 118.4L427.3 119.2L425.6 119.9L424.7 119.2ZM435.9 105.8L437.2 105.2L440.0 104.9L443.3 102.7L442.5 101.1L439.7 101.0L438.2 98.9L437.7 101.5L437.3 102.9L435.9 102.9L435.3 104.1ZM438.3 82.6L439.7 84.2L440.1 87.0L440.4 90.8L441.8 92.6L439.4 95.3L440.4 97.1L438.3 98.0L438.3 94.4L438.3 90.8L438.0 87.0L438.0 84.2ZM409.3 131.5L410.0 132.7L408.6 136.4L407.5 134.9L408.3 132.7ZM393.1 139.4L394.5 139.8L393.8 141.6L391.6 141.9L391.2 140.4ZM350.6 154.2L352.3 156.0L353.2 158.1L352.1 159.3L350.9 159.6L350.4 157.4ZM372.3 160.1L375.4 160.7L377.1 162.7L379.3 164.5L381.0 165.5L383.2 167.4L384.3 169.5L385.3 170.9L387.4 172.3L387.1 176.3L385.3 176.3L382.5 174.0L380.3 171.6L379.3 169.2L377.5 166.7L376.1 164.5L374.0 162.7ZM386.3 177.7L388.5 176.6L390.9 177.4L394.2 177.1L396.9 178.0L399.4 179.1L399.3 180.4L395.9 180.0L391.6 179.1L388.1 178.6ZM400.1 179.7L403.0 179.7L405.8 179.8L408.6 180.0L411.4 179.8L411.4 180.5L407.2 180.7L403.0 180.8L400.1 180.5ZM412.1 182.7L414.3 180.8L417.1 180.0L416.4 180.8L413.6 182.5ZM391.6 165.5L392.6 165.2L394.5 165.9L394.9 164.1L397.3 163.5L398.7 161.7L400.6 160.7L401.8 159.3L403.0 158.1L403.9 159.6L406.1 160.7L404.8 162.0L403.9 163.1L404.4 165.2L405.8 166.7L404.1 167.1L403.7 169.2L402.3 170.2L402.0 172.3L401.5 173.7L399.7 173.7L398.0 172.7L395.9 172.9L393.5 172.3L393.3 170.5L391.6 168.8L391.6 166.9ZM406.9 166.9L408.3 166.2L411.2 166.7L414.0 165.8L414.6 165.9L413.3 167.5L410.0 167.4L407.9 167.4L407.2 169.2L409.0 169.5L411.9 169.2L411.9 169.8L409.7 170.6L410.3 172.6L411.7 174.2L411.0 175.4L409.6 174.9L409.3 173.7L408.5 172.0L407.8 173.0L407.8 175.9L406.5 175.9L406.5 173.0L405.5 171.9L406.2 169.9L406.9 168.1ZM422.8 169.2L424.9 168.6L427.0 169.2L427.3 171.6L429.1 172.7L432.4 170.3L434.8 171.2L436.9 171.7L439.7 172.9L441.8 173.6L443.7 175.4L445.4 176.6L446.5 177.6L445.8 178.7L447.5 180.5L449.6 182.5L450.7 182.7L448.2 182.7L446.1 182.3L444.7 180.5L442.5 179.1L441.1 179.0L440.1 180.5L439.0 181.1L436.9 181.0L434.8 179.6L432.6 179.8L433.8 178.0L432.6 175.9L429.8 174.6L427.0 173.4L425.6 173.7L425.3 172.6L424.2 172.0L426.7 171.5L424.6 170.9L422.8 170.0ZM447.5 176.0L449.6 175.9L451.7 174.9L452.9 174.2L452.4 175.4L450.3 176.9L448.2 176.9ZM408.0 141.6L410.3 141.7L410.5 143.8L409.5 145.5L409.6 147.8L411.4 148.3L412.9 150.0L411.9 149.6L410.7 148.9L408.6 148.7L408.0 147.4L407.2 146.0L407.6 144.5ZM410.0 158.1L412.1 155.9L415.0 154.3L416.2 156.0L416.1 158.9L415.0 159.9L413.6 159.3L412.9 157.7L410.5 157.4ZM413.6 150.3L415.0 150.6L415.1 152.4L414.3 153.6L413.8 152.2ZM410.0 151.3L411.7 151.7L412.1 153.9L411.4 155.0L410.7 153.9L410.0 153.2ZM403.2 156.2L404.7 155.0L406.5 152.7L406.2 152.0L404.4 154.2ZM407.9 149.0L409.2 149.3L408.9 150.6L408.2 150.3ZM229.5 90.6L232.6 90.2L235.4 89.5L238.2 89.3L239.5 88.5L238.7 88.0L239.9 85.9L238.0 85.1L237.5 84.0L237.1 82.6L235.4 81.2L234.7 79.6L233.3 79.2L234.4 77.6L234.7 76.0L231.9 76.0L233.3 74.0L230.5 74.0L229.3 76.2L229.6 78.7L229.8 80.4L230.7 80.2L230.5 81.6L232.6 81.4L233.0 83.2L233.3 84.3L231.2 84.5L231.5 86.1L230.2 87.2L231.9 87.8L233.3 88.1L231.6 88.5ZM229.1 86.6L228.8 84.5L229.5 82.2L228.8 80.8L226.9 80.6L225.5 82.2L223.4 82.8L223.7 84.5L224.4 85.7L223.0 87.0L223.7 88.0L225.8 87.4L228.3 86.8ZM255.2 111.6L259.6 111.3L259.0 113.2L258.7 113.7L255.2 112.2ZM249.3 106.6L251.1 106.6L251.2 109.4L249.6 109.9L249.4 107.8ZM249.8 103.9L250.8 103.2L251.0 104.9L250.5 105.9L249.7 104.9ZM270.9 115.6L274.6 116.1L272.9 116.4L270.9 116.1ZM283.2 116.4L284.2 116.0L286.3 115.5L285.6 116.4L284.2 117.1ZM310.3 43.9L312.8 45.9L317.1 46.7L318.8 45.7L317.1 41.5L317.8 38.0L321.7 35.2L326.6 32.9L332.3 30.6L335.5 29.1L333.7 28.2L328.0 29.4L321.0 31.7L316.7 34.6L313.9 38.5L311.5 41.5ZM366.2 19.5L373.3 15.6L378.9 20.2L386.0 24.3L383.2 26.4L377.5 24.9L371.9 22.7ZM431.2 31.7L436.9 31.2L442.5 33.2L449.6 33.8L448.2 35.2L439.7 35.2L432.6 35.2L431.2 33.8ZM435.5 38.0L440.4 38.2L439.7 39.6L436.2 39.3ZM489.9 44.4L495.6 44.6L495.6 45.7L489.9 45.7ZM304.0 16.9L309.6 16.6L308.2 18.5L304.0 18.2ZM312.5 16.2L319.5 15.2L326.6 15.6L330.1 16.9L322.4 18.2L318.1 18.9L313.9 18.2ZM306.1 49.2L308.2 49.7L307.5 51.0L306.1 50.5ZM77.8 27.3L82.0 23.9L84.8 25.2L82.0 27.9ZM417.8 165.0L419.4 165.9L419.2 168.8L418.1 167.4ZM418.5 172.3L422.5 172.3L422.0 173.2L418.8 173.0ZM458.8 177.7L460.4 178.7L460.1 179.1L458.8 178.3ZM463.0 181.1L464.9 181.5L464.6 182.1L463.2 181.7ZM469.7 197.2L473.1 199.5L472.8 200.0L469.4 197.6ZM473.1 189.4L474.1 189.7L474.5 191.6L473.7 191.2ZM488.2 192.9L490.1 192.9L490.1 194.1L488.2 194.1ZM450.7 171.7L453.2 173.2L453.9 174.6L452.9 174.0ZM456.1 175.7L457.8 177.1L457.5 177.7L456.4 176.9ZM459.1 88.9L462.1 86.6L464.2 84.7L467.0 81.6L468.4 79.2L467.3 76.2L468.4 74.8L465.2 75.2L460.9 77.2L458.1 81.2ZM119.9 64.8L122.3 65.0L124.4 66.3L120.9 66.3ZM128.0 52.9L131.5 52.2L132.2 54.4L128.7 54.9ZM123.0 38.5L128.7 38.5L130.1 40.4L125.1 40.9ZM444.0 100.8L445.4 99.7L447.6 98.7L447.1 99.6L445.1 101.0ZM448.9 98.3L450.5 97.4L450.0 98.2ZM452.4 96.2L454.1 94.4L455.6 92.6L457.8 90.0L457.0 91.5L454.7 94.4Z"/><path fill="#62a0ea" d="M304.0 98.9L306.8 97.1L310.3 96.6L312.5 97.1L312.5 99.4L309.9 100.4L308.7 101.0L309.6 103.2L311.8 104.9L312.2 106.6L313.9 105.8L312.5 108.3L313.2 109.9L313.9 112.7L311.1 113.7L308.9 113.2L306.8 112.4L306.8 109.9L307.5 107.8L308.2 107.8L306.1 105.2L304.7 103.2L304.7 100.6ZM320.2 97.1L323.8 96.7L324.5 99.7L322.4 102.2L320.2 101.5ZM107.5 96.7L110.3 94.8L112.4 93.5L115.9 93.9L117.8 95.3L118.1 97.1L115.2 97.1L113.1 96.2L110.3 96.9ZM113.4 105.4L115.2 105.4L115.7 102.3L117.1 98.9L115.7 98.3L113.8 99.7L113.1 103.2ZM118.1 98.0L121.6 98.0L124.4 99.7L124.4 100.6L122.0 100.1L122.0 102.7L120.9 103.2L119.5 101.8L119.5 99.7L118.1 98.5ZM119.8 105.4L120.2 104.6L124.4 103.5L125.8 103.5L124.4 104.6L121.6 105.9ZM124.8 102.7L127.2 101.7L129.7 101.3L129.7 102.3L127.2 102.7ZM98.3 83.6L99.7 83.6L101.4 88.9L100.7 90.0L99.7 88.0ZM384.3 87.8L386.7 86.6L390.2 83.6L392.4 79.8L393.1 80.0L391.6 84.0L388.1 87.4L385.3 88.1Z"/></g></svg>
<div style="position:absolute;left:398px;top:262.6px;width:146px;height:47.4px;background:rgba(50,50,50,0.73);border-radius:5px"></div>
<span class="t" style="left:271.0px;width:400px;text-align:center;top:270.85px;font-size:8.5px;line-height:11px;color:#fff;font-weight:bold;transform:scaleX(1.2145);transform-origin:50% 50%;-webkit-text-stroke:0;">+06 (UTC+06)</span>
<span class="t" style="left:271.0px;width:400px;text-align:center;top:281.33px;font-size:8px;line-height:10px;color:#fff;font-weight:normal;transform:scaleX(1.0499);transform-origin:50% 50%;-webkit-text-stroke:0;">Омск, Российская Федерация</span>
<span class="t" style="left:271.0px;width:400px;text-align:center;top:291.35px;font-size:8.5px;line-height:11px;color:#fff;font-weight:bold;transform:scaleX(1.1954);transform-origin:50% 50%;-webkit-text-stroke:0;">15:00</span>
<svg style="position:absolute;left:555px;top:276.500px" width="10" height="12" viewBox="0 0 10 12"><path d="M5 10.600C3.300 8.300 1.200 6.700 1.200 4.400A3.800 3.800 0 0 1 8.800 4.400C8.800 6.700 6.700 8.300 5 10.600Z" fill="#000"/><circle cx="5" cy="4.300" r="1.700" fill="#fff"/></svg></body></html>
